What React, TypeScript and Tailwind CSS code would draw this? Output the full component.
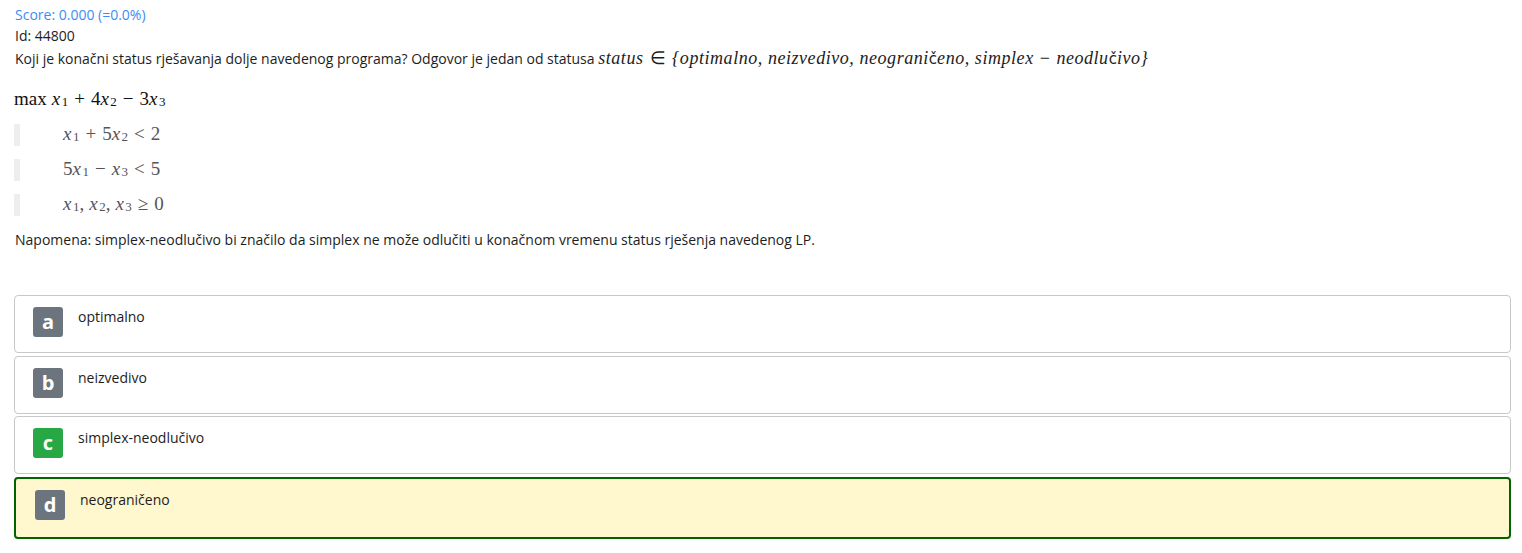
const options = [
  { letter: "a", text: "optimalno", badge: "bg-[#6c757d]" },
  { letter: "b", text: "neizvedivo", badge: "bg-[#6c757d]" },
  { letter: "c", text: "simplex-neodlučivo", badge: "bg-[#28a745]" },
];

const M = ({ children }: { children: React.ReactNode }) => (
  <span className="font-['Liberation_Serif'] italic tracking-[0.5px]">{children}</span>
);

const Sub = ({ children }: { children: React.ReactNode }) => (
  <sub className="text-[13px] not-italic relative top-[1px] ml-[1px]">{children}</sub>
);

// binary operator / relation with math spacing
const Op = ({ children }: { children: React.ReactNode }) => (
  <span className="not-italic mx-[6px]">{children}</span>
);

const Constraint = ({ children }: { children: React.ReactNode }) => (
  <div className="flex items-center h-[35px]">
    <div className="w-[6px] h-[22px] bg-[#eeeeee]" />
    <div className="pl-[43px] text-[19px] text-[#555] font-['Liberation_Serif'] whitespace-nowrap">{children}</div>
  </div>
);

const C = () => <span className="not-italic font-['DejaVu_Sans'] text-[15px] tracking-normal">č</span>;

export default function App() {
  return (
    <div className="font-['Open_Sans',sans-serif] text-[14px] text-[#1d1d1d] px-[14px] pt-[4px] bg-white min-h-[553px]">
      <div className="pl-[1px] leading-[21px] text-[#3b8cf3]">Score: 0.000 (=0.0%)</div>
      <div className="pl-[1px] leading-[21px]">Id: 44800</div>
      <div className="pl-[1px] leading-[24px] whitespace-nowrap">
        Koji je konačni status rješavanja dolje navedenog programa? Odgovor je jedan od statusa{" "}
        <span className="text-[18px] font-['Liberation_Serif',serif] italic tracking-[0.55px]">
          status<Op>∈</Op>
          {"{"}optimalno, neizvedivo, neograni
          <C />
          eno, simplex<Op>−</Op>neodlu
          <C />
          ivo{"}"}
        </span>
      </div>

      <div className="mt-[17px] text-[19px] font-['Liberation_Serif'] leading-[22px] text-[#111] whitespace-nowrap">
        <span className="not-italic mr-[5px]">max</span>
        <M>x</M>
        <Sub>1</Sub>
        <Op>+</Op>4<M>x</M>
        <Sub>2</Sub>
        <Op>−</Op>3<M>x</M>
        <Sub>3</Sub>
      </div>

      <div className="mt-[7px]">
        <Constraint>
          <M>x</M>
          <Sub>1</Sub>
          <Op>+</Op>5<M>x</M>
          <Sub>2</Sub>
          <Op>&lt;</Op>2
        </Constraint>
        <Constraint>
          5<M>x</M>
          <Sub>1</Sub>
          <Op>−</Op>
          <M>x</M>
          <Sub>3</Sub>
          <Op>&lt;</Op>5
        </Constraint>
        <Constraint>
          <M>x</M>
          <Sub>1</Sub>
          <span className="mr-[5px]">,</span>
          <M>x</M>
          <Sub>2</Sub>
          <span className="mr-[5px]">,</span>
          <M>x</M>
          <Sub>3</Sub>
          <Op>≥</Op>0
        </Constraint>
      </div>

      <div className="pl-[1px] mt-[7px] leading-[21px]">
        Napomena: simplex-neodlučivo bi značilo da simplex ne može odlučiti u konačnom vremenu status rješenja
        navedenog LP.
      </div>

      <div className="mt-[45px] flex flex-col gap-[2.5px] w-[1497px]">
        {options.map((o) => (
          <div
            key={o.letter}
            className="h-[58px] border border-[#c8c8c8] rounded-[4px] bg-white flex items-start pl-[18px] pt-[11px]"
          >
            <div
              className={`w-[30px] h-[30px] rounded-[3px] ${o.badge} text-white font-bold text-[20px] flex items-center justify-center leading-none`}
            >
              {o.letter}
            </div>
            <div className="ml-[15px] -mt-[1px] leading-[21px]">{o.text}</div>
          </div>
        ))}
        <div className="h-[62px] border-2 border-[#006400] rounded-[4px] bg-[#fff8cf] flex items-start pl-[19px] pt-[11px]">
          <div className="w-[30px] h-[30px] rounded-[3px] bg-[#6c757d] text-white font-bold text-[20px] flex items-center justify-center leading-none">
            d
          </div>
          <div className="ml-[15px] -mt-[1px] leading-[21px]">neograničeno</div>
        </div>
      </div>
    </div>
  );
}
